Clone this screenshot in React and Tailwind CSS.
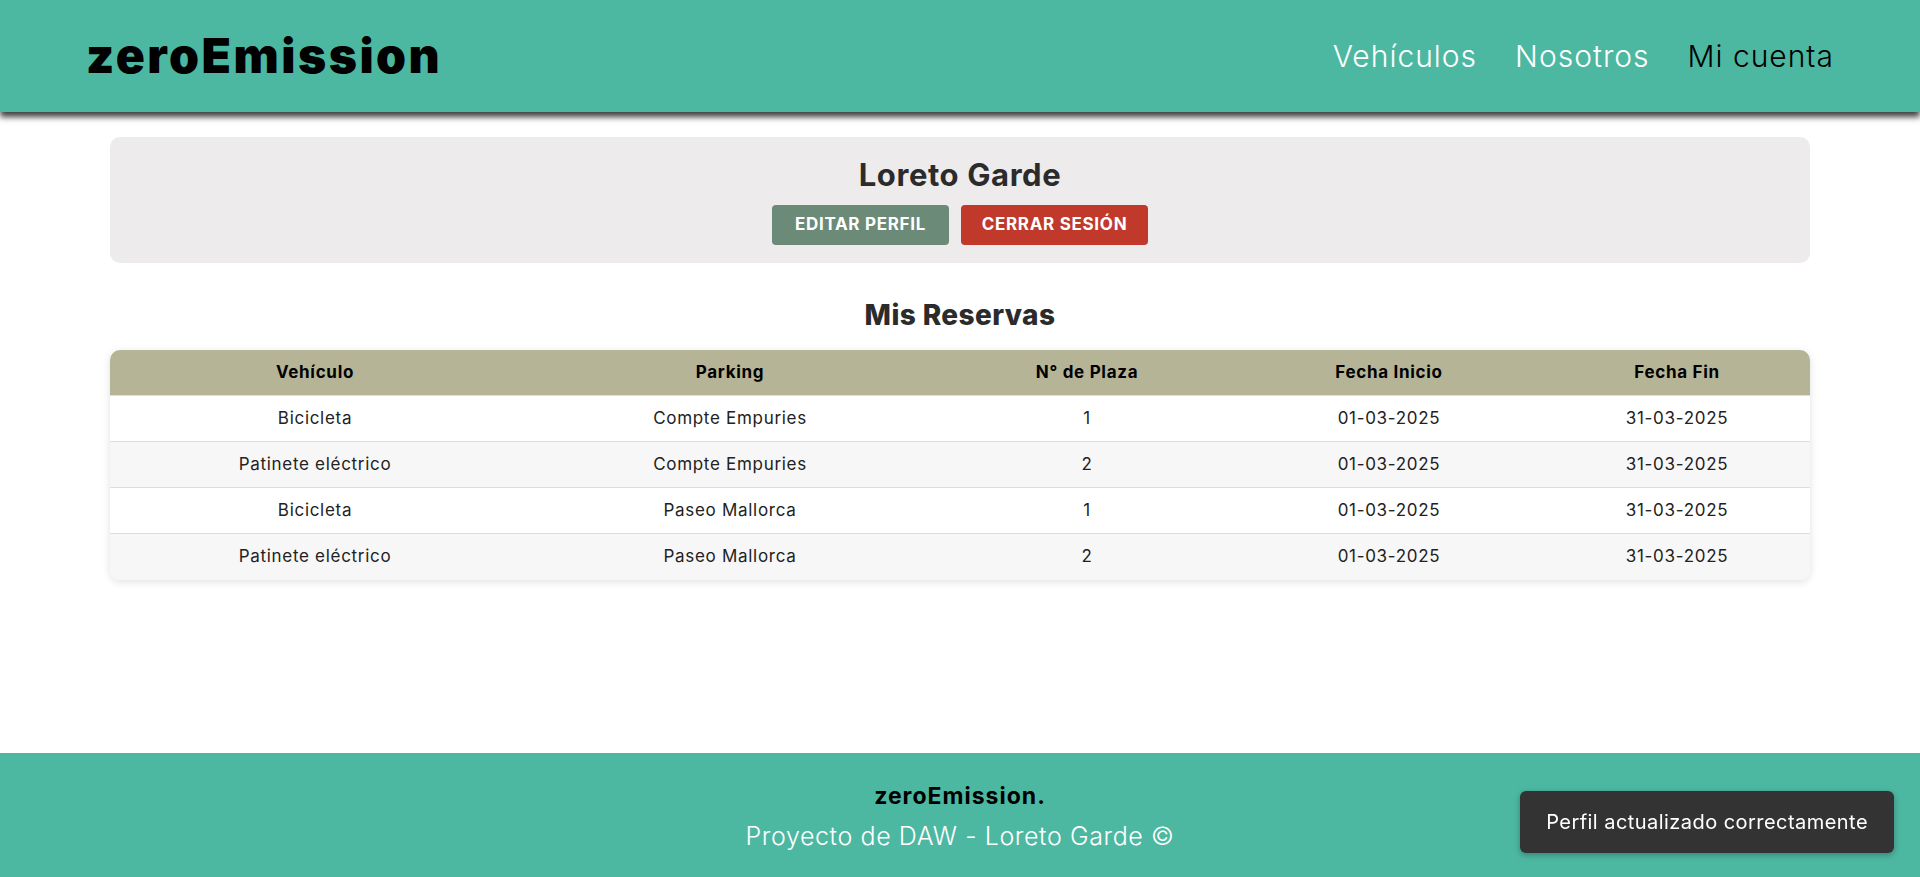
import React from "react";

const reservas = [
  { vehiculo: "Bicicleta", parking: "Compte Empuries", plaza: 1, inicio: "01-03-2025", fin: "31-03-2025" },
  { vehiculo: "Patinete eléctrico", parking: "Compte Empuries", plaza: 2, inicio: "01-03-2025", fin: "31-03-2025" },
  { vehiculo: "Bicicleta", parking: "Paseo Mallorca", plaza: 1, inicio: "01-03-2025", fin: "31-03-2025" },
  { vehiculo: "Patinete eléctrico", parking: "Paseo Mallorca", plaza: 2, inicio: "01-03-2025", fin: "31-03-2025" },
];

export default function App() {
  return (
    <div className="flex min-h-screen flex-col bg-white font-['Inter','Open_Sans',sans-serif] text-[#222]">
      <header className="relative z-10 flex h-[112px] items-center justify-between bg-[#4db8a2] pl-[86px] pr-[86px] shadow-[0_5px_6px_rgba(0,0,0,0.75)]">
        <h1 className="text-[48px] font-black tracking-[2.5px] text-black">zeroEmission</h1>
        <nav className="flex items-center gap-[38px] text-[30px] font-light tracking-[1px]">
          <a href="#" className="text-white">Vehículos</a>
          <a href="#" className="text-white">Nosotros</a>
          <a href="#" className="text-black">Mi cuenta</a>
        </nav>
      </header>

      <main className="flex-1 px-[110px] pt-[25px] pb-10">
        <section className="flex flex-col items-center rounded-[10px] bg-[#edebeb] pt-[15px] pb-[18px]">
          <h2 className="text-[31px] font-bold tracking-[0.6px] text-[#2b2b2b]">Loreto Garde</h2>
          <div className="mt-[6px] flex gap-3">
            <button className="h-10 w-[177px] rounded-[4px] bg-[#6b8a78] text-[17px] font-bold tracking-[0.7px] text-white">EDITAR PERFIL</button>
            <button className="h-10 w-[187px] rounded-[4px] bg-[#c0392b] text-[17px] font-bold tracking-[0.7px] text-white">CERRAR SESIÓN</button>
          </div>
        </section>

        <h2 className="mt-[31px] text-center text-[28px] font-extrabold tracking-[0.4px] text-[#2b2b2b]">Mis Reservas</h2>

        <div className="mt-[14px] overflow-hidden rounded-[10px] shadow-[0_2px_8px_rgba(0,0,0,0.12)]">
          <table className="w-full table-fixed border-collapse text-center text-[17px] tracking-[0.7px]">
            <colgroup>
              <col className="w-[410px]" />
              <col className="w-[420px]" />
              <col className="w-[294px]" />
              <col className="w-[310px]" />
              <col className="w-[266px]" />
            </colgroup>
            <thead>
              <tr className="h-[46px] bg-[#b5b496] text-black">
                <th className="font-bold">Vehículo</th>
                <th className="font-bold">Parking</th>
                <th className="font-bold">N° de Plaza</th>
                <th className="font-bold">Fecha Inicio</th>
                <th className="font-bold">Fecha Fin</th>
              </tr>
            </thead>
            <tbody>
              {reservas.map((r, i) => (
                <tr key={i} className={`h-[46px] border-t border-[#dddddd] ${i % 2 ? "bg-[#f7f7f7]" : "bg-white"}`}>
                  <td>{r.vehiculo}</td>
                  <td>{r.parking}</td>
                  <td>{r.plaza}</td>
                  <td>{r.inicio}</td>
                  <td>{r.fin}</td>
                </tr>
              ))}
            </tbody>
          </table>
        </div>
      </main>

      <footer className="flex h-[124px] flex-col items-center justify-center bg-[#4db8a2] pt-[4px]">
        <div className="text-[23px] font-bold tracking-[1px] text-black">zeroEmission.</div>
        <div className="mt-[4px] text-[25px] font-light tracking-[0.6px] text-white">Proyecto de DAW - Loreto Garde ©</div>
      </footer>

      <div className="fixed right-[26px] bottom-[24px] rounded-[6px] bg-[#333333] px-[26px] py-[16px] text-[20px] tracking-[0.45px] text-white shadow-[0_2px_6px_rgba(0,0,0,0.3)]">
        Perfil actualizado correctamente
      </div>
    </div>
  );
}
